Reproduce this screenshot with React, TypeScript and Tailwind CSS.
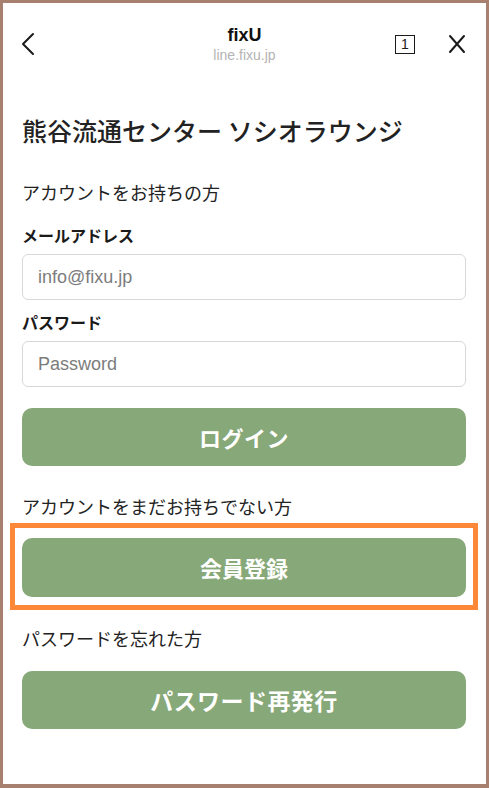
const JP = "font-['Noto_Sans_CJK_JP','Noto_Sans',sans-serif]";

const Header = () => (
  <header className="grid grid-cols-[1fr_auto_1fr] items-start pt-[21px]">
    <div className="pl-[16px] pt-[8px]">
      <svg width="18" height="24" viewBox="0 0 18 24" fill="none">
        <path d="M14 2 L4 12 L14 22" stroke="#1a1a1a" strokeWidth="2" strokeLinecap="round" strokeLinejoin="round" />
      </svg>
    </div>
    <div className="flex flex-col items-center">
      <div className="text-[18px] leading-[22px] font-bold text-[#111] font-['Liberation_Sans',sans-serif]">fixU</div>
      <div className="text-[14px] leading-[18px] text-[#b4b4b4] font-['Liberation_Sans',sans-serif]">line.fixu.jp</div>
    </div>
    <div className="flex justify-end items-center gap-[33px] pr-[20px] pt-[10px]">
      <div className="w-[20px] h-[19px] border-[1.5px] border-[#1a1a1a] flex items-center justify-center text-[14px] leading-none text-[#1a1a1a] font-['Liberation_Sans',sans-serif]">
        1
      </div>
      <svg width="18" height="20" viewBox="0 0 18 20" fill="none">
        <path d="M2 2 L16 18 M16 2 L2 18" stroke="#1a1a1a" strokeWidth="2" strokeLinecap="round" />
      </svg>
    </div>
  </header>
);

const Field = ({ label, placeholder, type }: { label: string; placeholder: string; type: string }) => (
  <div>
    <label className="block text-[16px] leading-[24px] font-bold text-[#1a1a1a]">{label}</label>
    <input
      type={type}
      placeholder={placeholder}
      className="mt-[7px] w-full h-[46px] rounded-[6px] border border-[#d8d8d8] bg-white px-[15px] text-[18px] text-[#333] placeholder:text-[#7c7c7c] font-['Liberation_Sans',sans-serif] outline-none"
    />
  </div>
);

const GreenButton = ({ children }: { children: React.ReactNode }) => (
  <button className="w-full h-[58px] rounded-[10px] bg-[#87a878] text-white text-[22px] font-bold tracking-[0.02em]">
    {children}
  </button>
);

const App = () => {
  return (
    <div className={`w-[489px] h-[788px] bg-white border-[3px] border-b-[4px] border-[#a7806f] overflow-hidden ${JP}`}>
      <Header />

      <main className="px-[19px] pr-[20px]">
        <h1 className="mt-[50px] text-[25px] leading-[32px] font-medium text-[#222]">
          熊谷流通センター ソシオラウンジ
        </h1>

        <p className="mt-[33px] text-[18px] leading-[26px] text-[#222]">アカウントをお持ちの方</p>

        <div className="mt-[18px]">
          <Field label="メールアドレス" placeholder="info@fixu.jp" type="email" />
        </div>
        <div className="mt-[10px]">
          <Field label="パスワード" placeholder="Password" type="password" />
        </div>

        <div className="mt-[21px]">
          <GreenButton>ログイン</GreenButton>
        </div>

        <p className="mt-[27px] text-[18px] leading-[26px] text-[#222]">アカウントをまだお持ちでない方</p>

        {/* highlighted register button */}
        <div className="mt-[4px] -mx-[12px] border-[5px] border-[#fd8838] px-[7px] pt-[10px] pb-[8px]">
          <button className="w-full h-[59px] rounded-[10px] bg-[#87a878] text-white text-[22px] font-bold">
            会員登録
          </button>
        </div>

        <p className="mt-[15px] text-[18px] leading-[26px] text-[#222]">パスワードを忘れた方</p>

        <div className="mt-[20px]">
          <GreenButton>
            <span className="text-[23px]">パスワード再発行</span>
          </GreenButton>
        </div>
      </main>
    </div>
  );
};

export default App;
